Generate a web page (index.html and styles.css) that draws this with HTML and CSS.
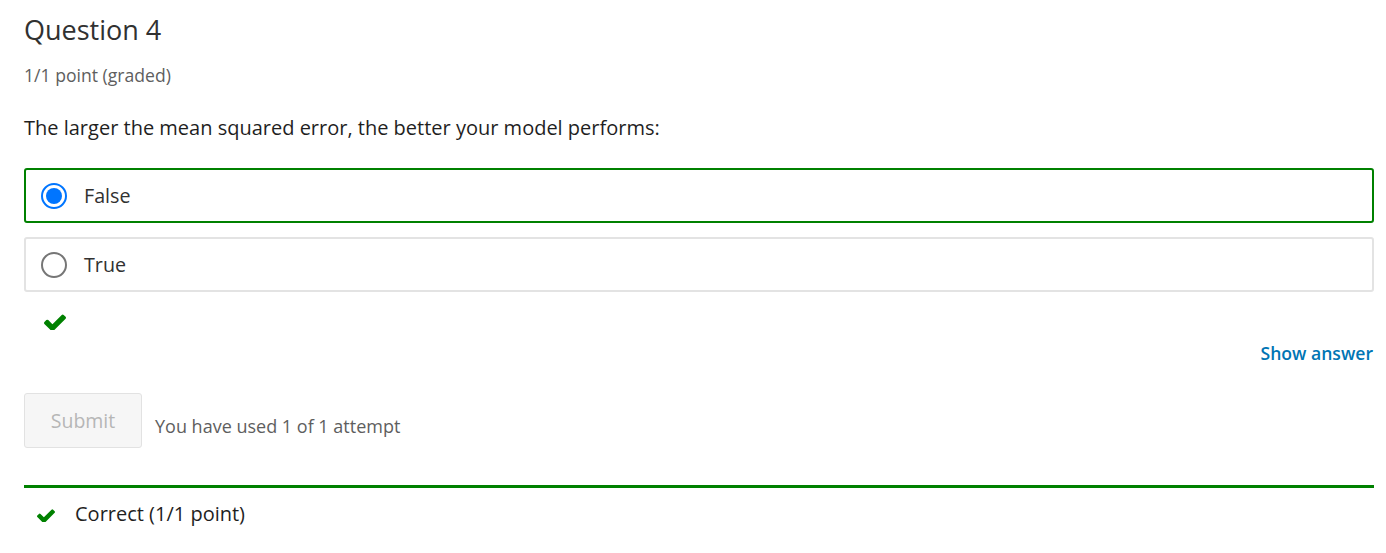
FILE: index.html
```html
<!DOCTYPE html>
<html>
<head>
<meta charset="utf-8">
<link rel="stylesheet" href="styles.css">
</head>
<body>
<div class="problem">
  <h3 class="title">Question 4</h3>
  <div class="points">1/1 point (graded)</div>
  <p class="prompt">The larger the mean squared error, the better your model performs:</p>
  <div class="choices">
    <label class="choice correct"><span class="radio checked"></span><span class="label">False</span></label>
    <label class="choice"><span class="radio"></span><span class="label">True</span></label>
  </div>
  <div class="status">
    <svg class="check" viewBox="121 302 1550 1120" width="22" height="16"><path d="M1671 566q0 40-28 68l-724 724-136 136q-28 28-68 28t-68-28l-136-136-362-362q-28-28-28-68t28-68l136-136q28-28 68-28t68 28l294 295 656-657q28-28 68-28t68 28l136 136q28 28 28 68z" fill="#008100"/></svg>
  </div>
  <div class="show-row"><a class="show">Show answer</a></div>
  <div class="actions">
    <button class="submit">Submit</button>
    <span class="attempts">You have used 1 of 1 attempt</span>
  </div>
  <div class="notification">
    <svg class="check small" viewBox="121 302 1550 1120" width="18" height="13"><path d="M1671 566q0 40-28 68l-724 724-136 136q-28 28-68 28t-68-28l-136-136-362-362q-28-28-28-68t28-68l136-136q28-28 68-28t68 28l294 295 656-657q28-28 68-28t68 28l136 136q28 28 28 68z" fill="#008100"/></svg>
    <span class="note-text">Correct (1/1 point)</span>
  </div>
</div>
</body>
</html>
```

FILE: styles.css
```css
html, body {
  margin: 0;
  padding: 0;
  background: #fff;
}
body {
  font-family: "Open Sans", "Liberation Sans", sans-serif;
  color: #313131;
}
.problem {
  padding: 0 12px 0 24px;
}
.title {
  margin: 0;
  padding-top: 12px;
  font-size: 27px;
  font-weight: 400;
  line-height: 36px;
  color: #313131;
}
.points {
  margin-top: 15px;
  font-size: 17.6px;
  line-height: 24px;
  color: #5e5e5e;
}
.prompt {
  margin: 27px 0 0;
  font-size: 20px;
  line-height: 28px;
  color: #1f1f1f;
}
.choices {
  margin-top: 26px;
  display: flex;
  flex-direction: column;
  gap: 14px;
}
.choice {
  display: flex;
  align-items: center;
  height: 55px;
  box-sizing: border-box;
  border: 2px solid #e3e3e3;
  border-radius: 3px;
  padding-left: 15px;
}
.choice.correct {
  border-color: #008100;
}
.radio {
  width: 26px;
  height: 26px;
  box-sizing: border-box;
  border-radius: 50%;
  border: 2px solid #767676;
  background: #fff;
  flex: none;
}
.radio.checked {
  border-color: #0075ff;
  position: relative;
}
.radio.checked::after {
  content: "";
  position: absolute;
  left: 3px;
  top: 3px;
  width: 16px;
  height: 16px;
  border-radius: 50%;
  background: #0075ff;
}
.label {
  margin-left: 17px;
  font-size: 19.7px;
  color: #313131;
}
.status {
  margin-top: 22px;
  padding-left: 20px;
  height: 20px;
}
.check {
  display: block;
}
.show-row {
  display: flex;
  justify-content: flex-end;
  margin-top: 7px;
  padding-right: 1px;
}
.show {
  font-size: 17.6px;
  font-weight: 600;
  color: #0075b4;
  line-height: 24px;
}
.actions {
  display: flex;
  align-items: flex-end;
  margin-top: 28px;
}
.submit {
  width: 118px;
  height: 55px;
  border: 1px solid #e2e2e2;
  border-radius: 3px;
  background: #f6f6f6;
  color: #b6b6b6;
  font-family: "Open Sans", "Liberation Sans", sans-serif;
  font-size: 19.5px;
  padding: 0;
}
.attempts {
  margin-left: 13px;
  font-size: 18px;
  color: #5e5e5e;
  line-height: 24px;
  margin-bottom: 10px;
}
.notification {
  margin-top: 37px;
  border-top: 3px solid #008100;
  display: flex;
  align-items: center;
  padding: 14px 0 0 13px;
}
.check.small {
  flex: none;
  margin-top: 2px;
}
.note-text {
  margin-left: 20px;
  font-size: 20px;
  color: #1f1f1f;
  line-height: 24px;
}
```
